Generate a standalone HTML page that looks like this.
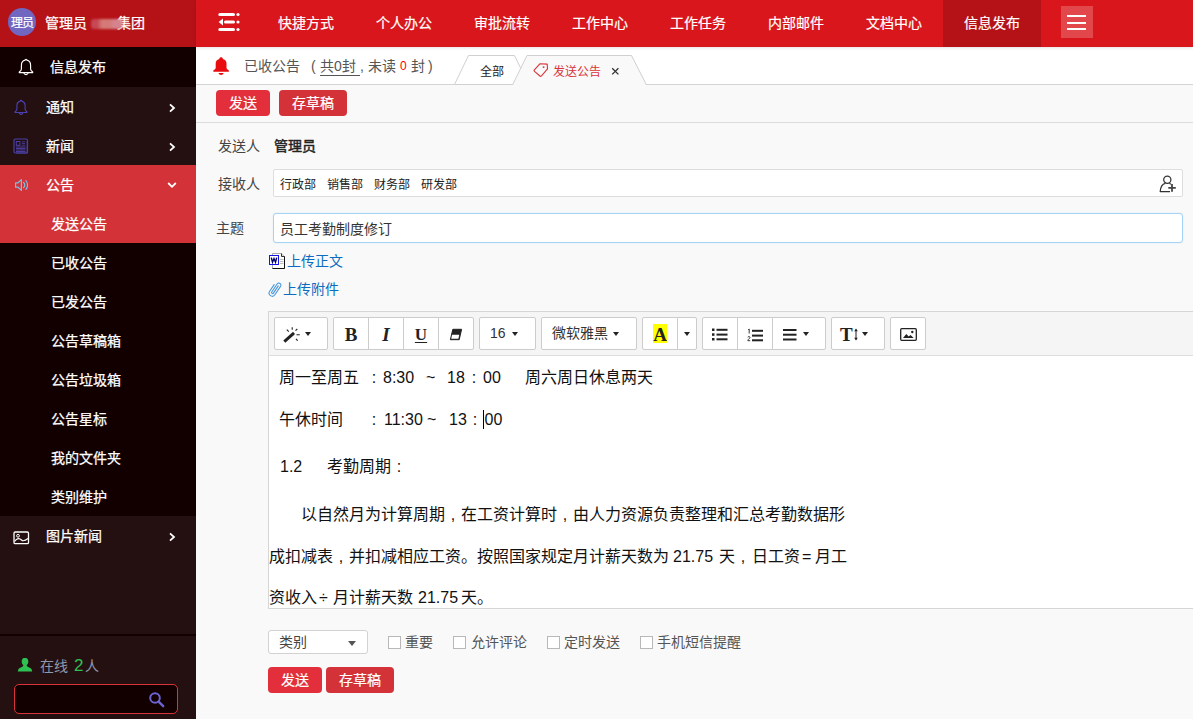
<!DOCTYPE html>
<html lang="zh-CN">
<head>
<meta charset="utf-8">
<title>OA</title>
<style>
*{box-sizing:border-box;margin:0;padding:0}
html,body{width:1193px;height:719px;overflow:hidden;background:#f9f9f9}
body{font-family:"Liberation Sans",sans-serif;font-size:14px;color:#333;position:relative}
.abs{position:absolute}
/* ---------- sidebar ---------- */
#side{position:absolute;left:0;top:0;width:196px;height:719px;background:#251011;-webkit-text-stroke:.25px #fff}
#side .hd{position:absolute;left:0;top:0;width:196px;height:47px;background:#b41217}
#side .av{position:absolute;left:8px;top:8px;width:28px;height:28px;border-radius:50%;background:#7166c0;color:#fff;font-size:12px;line-height:31px;text-align:center;letter-spacing:-.5px;text-indent:0;overflow:hidden;white-space:nowrap}
#side .nm{position:absolute;left:45px;top:0;height:46px;line-height:47px;color:#fff;font-size:14px;white-space:nowrap}
#side .ttl{position:absolute;left:0;top:47px;width:196px;height:40px;background:#120000;color:#fff;font-size:14px;line-height:40px}
#side .ttl span{position:absolute;left:50px;top:0}
.mi{position:absolute;left:0;width:196px;height:39px;line-height:41px;color:#fff;font-size:14px}
.mi span{position:absolute;left:46px;top:0}
.mi.on{background:#d33338}
.sub{position:absolute;left:0;top:243px;width:196px;height:273px;background:#120000}
.si{position:absolute;left:51px;color:#fff;font-size:14px;line-height:41px;height:39px;white-space:nowrap}
.chev{position:absolute;left:167px;top:14.500px;width:10px;height:12px}
.blur{position:absolute;left:46px;top:18.500px;width:30.500px;height:10px;background:linear-gradient(90deg,#c74755 0,#c74755 20%,#d67a78 35%,#d67a78 60%,#d5838f 75%,#d5838f 100%);border-radius:3px;filter:blur(1.200px);z-index:3}
#side .ft{-webkit-text-stroke:0;position:absolute;left:0;top:634px;width:196px;height:85px;background:#251011;border-top:2px solid #120000}
/* ---------- top bar ---------- */
#top{position:absolute;left:196px;top:0;width:997px;height:47px;background:#d9161b;box-shadow:0 1px 3px rgba(0,0,0,.12);z-index:2}
.nv{position:absolute;top:0;height:46px;line-height:46px;-webkit-text-stroke:.2px #fff;color:#fff;font-size:14px;width:98px;text-align:center;white-space:nowrap}
.nv.on{background:#b41217;height:47px}
/* ---------- tab strip ---------- */
#tabs{position:absolute;left:196px;top:47px;width:997px;height:38px;background:#fff;border-bottom:1px solid #d4d4d4}
/* ---------- content ---------- */
.ts{position:absolute;top:0;height:38px;line-height:39px;font-size:14px;color:#555;white-space:nowrap}
.btn{-webkit-text-stroke:.2px #fff;position:absolute;height:26px;border-radius:4px;color:#fff;font-size:14px;line-height:27px;text-align:center;white-space:nowrap}
.b1{background:#e22f3b}
.b2{background:#d33338}
.lbl{position:absolute;font-size:14px;color:#444;white-space:nowrap}
.inp{position:absolute;left:273px;width:910px;background:#fff;border:1px solid #ddd;border-radius:2px}

.lnk{position:absolute;font-size:14px;line-height:20px;color:#0b6cc0;white-space:nowrap}
#ed{position:absolute;left:268px;top:311px;width:930px;height:298px;border:1px solid #d6d6d6;background:#fff}
#tb{position:absolute;left:0;top:0;width:928px;height:44px;background:#f5f5f5;border-bottom:1px solid #ddd}
.tbn{position:absolute;top:5px;height:33px;background:#fff;border:1px solid #ccc;margin-left:-1px}
.tbn.f{border-radius:2px 0 0 2px;margin-left:0}
.tbn.l{border-radius:0 2px 2px 0}
.tbn.o{border-radius:2px;margin-left:0}
.tbn svg,.tbn div{position:absolute}
.car{width:0;height:0;border-left:3px solid transparent;border-right:3px solid transparent;border-top:4.500px solid #222}
.tx{position:absolute;font-size:16px;line-height:24px;color:#111;white-space:nowrap}
.cb{position:absolute;top:636px;width:13px;height:13px;background:#fff;border:1px solid #b8b8b8}
.cm{display:inline-block;width:16px;text-align:center}
.cl{position:absolute;top:632px;font-size:14px;line-height:20px;color:#555;white-space:nowrap}
</style>
</head>
<body>
<div id="side">
  <div class="hd"><div class="av">理员</div><div class="nm">管理员 <span class="blur"></span><span style="position:absolute;left:72px;top:0">集团</span></div></div>
  <div class="ttl">
    <svg class="abs" style="left:17px;top:10px" width="18" height="20" viewBox="0 0 18 20"><g transform="translate(0 -.2) scale(1 1.060)"><path d="M9 2.300c-.5 0-.9.400-.9.900-2.300.5-3.700 2.500-3.700 4.900v3.300c0 1.200-.9 2.100-2.100 3v.6h13.400v-.6c-1.200-.9-2.100-1.800-2.100-3v-3.300c0-2.400-1.400-4.400-3.700-4.900 0-.5-.4-.9-.9-.9z" fill="none" stroke="#fff" stroke-width="1.150" stroke-linejoin="round"/><path d="M6.800 15.200c.3 1 1.200 1.600 2.200 1.600s1.900-.6 2.200-1.600" fill="none" stroke="#fff" stroke-width="1.100"/></g></svg>
    <span>信息发布</span></div>
  <div class="mi" style="top:87px">
    <svg class="abs" style="left:13px;top:12px" width="16" height="17" viewBox="0 0 16 17"><g transform="translate(0 -.1) scale(1 1.080)"><path d="M8 1.300c-.4 0-.7.300-.7.700-2.100.5-3.400 2.300-3.400 4.400v3c0 1.100-.8 1.900-1.900 2.700v.5h12v-.5c-1.100-.8-1.900-1.600-1.900-2.700v-3c0-2.100-1.300-3.900-3.400-4.400 0-.4-.3-.7-.7-.7z" fill="none" stroke="#4a41b4" stroke-width="1.100" stroke-linejoin="round"/><path d="M6.200 12.900c.3.900 1 1.400 1.800 1.400s1.500-.5 1.800-1.400" fill="none" stroke="#4a41b4" stroke-width="1.100"/></g></svg>
    <span>通知</span>
    <svg class="chev" viewBox="0 0 10 12"><path d="M3 2.300l4 3.700-4 3.700" fill="none" stroke="#fff" stroke-width="1.800"/></svg></div>
  <div class="mi" style="top:126px">
    <svg class="abs" style="left:13px;top:12px" width="16" height="16" viewBox="0 0 16 16"><rect x="1" y="1" width="13.500" height="14" rx="1.500" fill="none" stroke="#4a40a6" stroke-width="1.200"/><path d="M14.200 3v12h-11" fill="none" stroke="#4a40a6" stroke-width="1.100"/><rect x="3.300" y="3.500" width="3.600" height="3.800" fill="none" stroke="#4a40a6" stroke-width="1"/><path d="M8.800 3.800h3.200M8.800 5.500h3.200M8.800 7.200h3.200" stroke="#4a40a6" stroke-width=".8"/><path d="M3 9h9.500M3 10.500h9.500M3 12h9.500M3 13.500h9.500" stroke="#4a40a6" stroke-width=".95"/></svg>
    <span>新闻</span>
    <svg class="chev" viewBox="0 0 10 12"><path d="M3 2.300l4 3.700-4 3.700" fill="none" stroke="#fff" stroke-width="1.800"/></svg></div>
  <div class="mi on" style="top:165px;height:78px">
    <svg class="abs" style="left:13.500px;top:13px" width="16" height="14" viewBox="0 0 16 14"><path d="M1.600 4.800h2.400l3.400-3.200v10.800l-3.400-3.200h-2.400z" fill="none" stroke="#78c2e2" stroke-width="1.200" stroke-linejoin="round"/><path d="M9.600 4.300c1.300 1.500 1.300 3.900 0 5.400M11.900 2.600c2.200 2.500 2.200 6.300 0 8.800" fill="none" stroke="#78c2e2" stroke-width="1.200" stroke-linecap="round"/></svg>
    <span>公告</span>
    <svg class="abs" style="left:166px;top:15px" width="12" height="10" viewBox="0 0 12 10"><path d="M2.200 3l3.800 3.800 3.800-3.800" fill="none" stroke="#fff" stroke-width="1.800"/></svg>
    <div class="si" style="top:39px">发送公告</div></div>
  <div class="sub">
    <div class="si" style="top:0">已收公告</div>
    <div class="si" style="top:39px">已发公告</div>
    <div class="si" style="top:78px">公告草稿箱</div>
    <div class="si" style="top:117px">公告垃圾箱</div>
    <div class="si" style="top:156px">公告星标</div>
    <div class="si" style="top:195px">我的文件夹</div>
    <div class="si" style="top:234px">类别维护</div>
  </div>
  <div class="mi" style="top:516px">
    <svg class="abs" style="left:13px;top:14.500px" width="17" height="14" viewBox="0 0 17 14"><rect x="1" y="1" width="14.500" height="11.600" rx="1.200" fill="none" stroke="#fff" stroke-width="1.300"/><circle cx="5" cy="4.800" r="1.400" fill="none" stroke="#fff" stroke-width="1"/><path d="M1.500 10.500c2.500-3.500 5-3.500 7-1.500s4 .5 6.500-1.500" fill="none" stroke="#fff" stroke-width="1.200"/></svg>
    <span>图片新闻</span>
    <svg class="chev" viewBox="0 0 10 12"><path d="M3 2.300l4 3.700-4 3.700" fill="none" stroke="#fff" stroke-width="1.800"/></svg></div>
  <div class="ft">
    <svg class="abs" style="left:17px;top:21px" width="16" height="16" viewBox="0 0 16 16"><path d="M8 .8c-2 0-3.300 1.500-3.300 3.600 0 1.600.7 3 1.700 3.700-.1 1.300-1 1.900-2.500 2.500-1.700.7-2.900 1.500-3.100 3.900h14.400c-.2-2.400-1.400-3.200-3.100-3.900-1.500-.6-2.400-1.200-2.500-2.500 1-.7 1.700-2.100 1.700-3.700 0-2.100-1.300-3.600-3.300-3.600z" fill="#2fc053"/></svg>
    <div class="abs" style="left:40px;top:18px;font-size:14px;line-height:24px;color:#8d99ae;white-space:nowrap">在线 <span style="color:#2fc053;font-size:17px;margin-left:2px">2</span><span style="margin-left:2px">人</span></div>
    <div class="abs" style="left:14px;top:48px;width:164px;height:30px;border:1px solid #d9343a;border-radius:5px;background:#120000">
      <svg class="abs" style="left:133px;top:6px" width="17" height="17" viewBox="0 0 17 17"><circle cx="7" cy="7" r="4.800" fill="none" stroke="#6a63d2" stroke-width="2"/><path d="M10.600 10.600l4.600 4.600" stroke="#6a63d2" stroke-width="2.400" stroke-linecap="round"/></svg>
    </div>
  </div>
</div>
<div id="top">
  <svg class="abs" style="left:20px;top:10px" width="26" height="24" viewBox="0 0 26 24"><g stroke="#fff" stroke-width="3" stroke-linecap="round"><path d="M3.800 4.500h13.700M9.500 12h8M3.800 19.500h13.700"/></g><path d="M2.600 12l4.400-3.400v6.800z" fill="#fff"/><g fill="#fff"><circle cx="22" cy="4.500" r="1.600"/><circle cx="22" cy="12" r="1.600"/><circle cx="22" cy="19.500" r="1.600"/></g></svg>
  <div class="nv" style="left:61px">快捷方式</div>
  <div class="nv" style="left:159px">个人办公</div>
  <div class="nv" style="left:257px">审批流转</div>
  <div class="nv" style="left:355px">工作中心</div>
  <div class="nv" style="left:453px">工作任务</div>
  <div class="nv" style="left:551px">内部邮件</div>
  <div class="nv" style="left:649px">文档中心</div>
  <div class="nv on" style="left:747px">信息发布</div>
  <div class="abs" style="left:865px;top:6px;width:32px;height:32px;background:#e2474c">
    <div class="abs" style="left:6px;top:9px;width:19px;height:2.300px;background:#fff"></div>
    <div class="abs" style="left:6px;top:16px;width:19px;height:2.200px;background:#fff"></div>
    <div class="abs" style="left:6px;top:22.200px;width:19px;height:2.100px;background:#fff"></div>
  </div>
</div>
<div id="tabs">
  <svg class="abs" style="left:16px;top:9px" width="18" height="20" viewBox="0 0 18 20"><path d="M9.100 1.300c-1 0-1.700.6-1.800 1.600C4.600 3.500 3.700 5.300 3.700 7.600v3.900c0 1.300-1 2.100-2.400 3.100v1.200h15.600v-1.200c-1.400-1-2.400-1.800-2.400-3.100V7.600c0-2.300-.9-4.100-3.600-4.700-.1-1-.8-1.600-1.800-1.600z" fill="#e80c0e"/><path d="M6.500 16.900h5.200c-.4 1.200-1.400 2-2.600 2s-2.200-.8-2.600-2z" fill="#e80c0e"/></svg>
  <div class="ts" style="left:48px">已收公告</div>
  <div class="ts" style="left:115px">(</div>
  <div class="ts" style="left:124px">共0封</div>
  <div class="abs" style="left:124px;top:28px;width:40px;height:1px;background:#555"></div>
  <div class="ts" style="left:164px">,</div>
  <div class="ts" style="left:172px">未读</div>
  <div class="ts" style="left:204px;color:#f00;font-size:12px">0</div>
  <div class="ts" style="left:215px">封</div>
  <div class="ts" style="left:232px">)</div>
  <svg class="abs" style="left:250px;top:0" width="220" height="38" viewBox="0 0 220 38">
    <path d="M8.500 37.500L22.500 8.500H68.500L82.500 37.500z" fill="#fff" stroke="#d0d0d0" stroke-width="1"/>
    <path d="M66.500 38.500L81 8.500H185.500L200.500 38.500z" fill="#f9f9f9" stroke="none"/>
    <path d="M66.500 38L81 8.500H185.500L200.500 38" fill="none" stroke="#d0d0d0" stroke-width="1"/>
  </svg>
  <div class="abs" style="left:284px;top:11px;font-size:12px;line-height:29px;color:#222;white-space:nowrap">全部</div>
  <svg class="abs" style="left:337px;top:16px" width="16" height="15" viewBox="0 0 16 15"><path d="M6.800 .8L14.200 1.100L14.500 5.900L8.500 12.900Q7.700 13.700 6.900 13L1.500 8.300Q.7 7.600 1.400 6.800Z" fill="none" stroke="#d9343a" stroke-width="1.100" stroke-linejoin="round"/><circle cx="10.600" cy="4.100" r=".95" fill="#d9343a"/></svg>
  <div class="abs" style="left:357px;top:11px;font-size:12px;line-height:28px;color:#d9343a;white-space:nowrap">发送公告</div>
  <svg class="abs" style="left:415px;top:20px" width="9" height="9" viewBox="0 0 9 9"><path d="M1.200 1.200l6.200 6.200M7.400 1.200l-6.200 6.200" stroke="#333" stroke-width="1.300"/></svg>
</div>
<div class="btn b1" style="left:216px;top:90px;width:54px">发送</div>
<div class="btn b2" style="left:279px;top:90px;width:68px">存草稿</div>
<div class="abs" style="left:196px;top:122px;width:997px;height:1px;background:#dcdcdc"></div>
<div class="lbl" style="left:218px;top:136px;line-height:20px">发送人</div>
<div class="lbl" style="left:274px;top:136px;line-height:20px;color:#222;-webkit-text-stroke:.45px #222">管理员</div>
<div class="lbl" style="left:218px;top:174px;line-height:20px">接收人</div>
<div class="inp" style="top:169px;height:28px;border-radius:2px">
  <div class="abs" style="left:6px;top:0;font-size:12px;line-height:31px;color:#222;white-space:nowrap;word-spacing:0"><span>行政部</span><span style="margin-left:11px">销售部</span><span style="margin-left:11px">财务部</span><span style="margin-left:11px">研发部</span></div>
  <svg class="abs" style="left:884px;top:5px" width="20" height="19" viewBox="0 0 20 19"><circle cx="9.300" cy="4.700" r="3.600" fill="none" stroke="#333" stroke-width="1.250"/><path d="M7.300 8.300C4.300 9 2.500 12 2.200 16.600H12" fill="none" stroke="#333" stroke-width="1.250" stroke-linejoin="round"/><path d="M11.300 8.300c.7.200 1.200.5 1.700.9" fill="none" stroke="#333" stroke-width="1.200"/><path d="M14 9.100v7.700M10.300 12.900h7.500" stroke="#444" stroke-width="1.800"/></svg>
</div>
<div class="lbl" style="left:216px;top:218px;line-height:20px">主题</div>
<div class="inp" style="top:213px;height:30px;border-color:#a3d3f5;border-radius:3px;box-shadow:0 0 2px rgba(102,175,233,.18)">
  <div class="abs" style="left:6px;top:0;font-size:14px;line-height:31px;color:#333;white-space:nowrap">员工考勤制度修订</div>
</div>
<svg class="abs" style="left:269px;top:253px" width="17" height="16" viewBox="0 0 17 16"><path d="M3.500 .5h9l3 3v12h-12z" fill="#fff" stroke="#aaa" stroke-width="1"/><path d="M12.500 .5v3h3" fill="#ddd" stroke="#333" stroke-width="1"/><path d="M15.500 3.500v12h-12" fill="none" stroke="#111" stroke-width="1"/><path d="M11 6.500h3.500M11 8.500h3.500M11 10.500h3.500" stroke="#bbb" stroke-width="1"/><rect x=".5" y="2.500" width="9" height="9" fill="#fff" stroke="#1212e6" stroke-width="1"/><path d="M2.300 4.600l1.200 4.600 1.500-3.600 1.500 3.600 1.200-4.600" fill="none" stroke="#00006e" stroke-width="1.400"/></svg>
<div class="lnk" style="left:287px;top:251px">上传正文</div>
<svg class="abs" style="left:268px;top:281px" width="15" height="16" viewBox="0 0 15 16"><path transform="translate(7.100 7.800) rotate(34) scale(1.180)" d="M.85 -3.500V3.800A.85 .85 0 0 1 -.85 3.800V-4.300A1.750 1.750 0 0 1 2.650 -4.300V4.300A2.650 2.650 0 0 1 -2.650 4.300V-2.500" fill="none" stroke="#4b98da" stroke-width=".95" stroke-linecap="round"/></svg>
<div class="lnk" style="left:283px;top:279px">上传附件</div>
<div id="ed">
 <div id="tb">
  <div class="tbn o" style="left:5px;width:54px">
    <svg style="left:6px;top:6px" width="24" height="22" viewBox="0 0 24 22"><path d="M3.300 17.700l8.400-7.600" stroke="#222" stroke-width="3" stroke-linecap="butt"/><path d="M11.500 10.300l1.500-1.400" stroke="#222" stroke-width="3"/><path d="M11.200 3.200v2.600M5.800 5.600l2 2M16.300 5l-1.800 1.600M15.500 10.800h3.300M15 15l1.700 1.700" stroke="#222" stroke-width="1.100"/></svg>
    <div class="car" style="left:30px;top:14px"></div></div>
  <div class="tbn f" style="left:64px;width:36px"><div style="left:0;top:0;width:34px;text-align:center;font-family:'Liberation Serif',serif;font-weight:bold;font-size:19px;line-height:33px;color:#222">B</div></div>
  <div class="tbn" style="left:100px;width:36px"><div style="left:0;top:0;width:34px;text-align:center;font-family:'Liberation Serif',serif;font-weight:bold;font-style:italic;font-size:19px;line-height:33px;color:#222">I</div></div>
  <div class="tbn" style="left:135px;width:36px"><div style="left:0;top:0;width:34px;text-align:center;font-family:'Liberation Serif',serif;font-weight:bold;font-size:17px;line-height:33px;color:#222;text-decoration:underline;text-underline-offset:2px">U</div></div>
  <div class="tbn l" style="left:170px;width:36px">
    <svg style="left:10px;top:10px" width="14" height="13" viewBox="0 0 14 13"><path d="M3.800 1.300h8.800l-2.400 10.400h-8.800z" fill="#222" stroke="#222" stroke-width="1" stroke-linejoin="round"/><path d="M3.100 6.800h7.200l-.9 4h-7.200z" fill="#fff"/></svg></div>
  <div class="tbn o" style="left:210px;width:57px"><div style="left:10px;top:0;font-size:14px;line-height:31px;color:#333">16</div><div class="car" style="left:32px;top:14px"></div></div>
  <div class="tbn o" style="left:272px;width:96px"><div style="left:10px;top:0;font-size:14px;line-height:31px;color:#333;white-space:nowrap">微软雅黑</div><div class="car" style="left:71px;top:14px"></div></div>
  <div class="tbn f" style="left:373px;width:36px"><div style="left:10px;top:6px;width:14px;height:19px;background:#ff0"></div><div style="left:0;top:0;width:34px;text-align:center;font-family:'Liberation Serif',serif;font-weight:bold;font-size:19px;line-height:33px;color:#222">A</div></div>
  <div class="tbn l" style="left:409px;width:20px"><div class="car" style="left:6px;top:14px"></div></div>
  <div class="tbn f" style="left:433px;width:36px">
    <svg style="left:9px;top:10px" width="16" height="13" viewBox="0 0 16 13"><g fill="#222"><rect x="0" y="0.500" width="2.500" height="2.500"/><rect x="0" y="5.300" width="2.500" height="2.500"/><rect x="0" y="10" width="2.500" height="2.500"/><rect x="4.500" y="0.800" width="11" height="2"/><rect x="4.500" y="5.600" width="11" height="2"/><rect x="4.500" y="10.300" width="11" height="2"/></g></svg></div>
  <div class="tbn" style="left:469px;width:36px">
    <svg style="left:9px;top:9.500px" width="16" height="15" viewBox="0 0 16 15"><g fill="#222"><rect x="5" y="1.800" width="11" height="2"/><rect x="5" y="6.600" width="11" height="2"/><rect x="5" y="11.300" width="11" height="2"/></g><path d="M1.200 1.800l1-.8v4.500" fill="none" stroke="#222" stroke-width=".9"/><path d="M.8 9.300c.2-1 2.200-1 2.200.1 0 1-2 1.800-2.200 3.300h2.400" fill="none" stroke="#222" stroke-width=".9"/></svg></div>
  <div class="tbn l" style="left:504px;width:54px">
    <svg style="left:10px;top:11px" width="15" height="12" viewBox="0 0 15 12"><g fill="#222"><rect x="0" y="0" width="13.500" height="2"/><rect x="0" y="4.700" width="13.500" height="2"/><rect x="0" y="9.500" width="13.500" height="2"/></g></svg>
    <div class="car" style="left:30px;top:14px"></div></div>
  <div class="tbn o" style="left:562px;width:54px"><div style="left:8px;top:0;font-family:'Liberation Serif',serif;font-weight:bold;font-size:19px;line-height:33px;color:#222">T</div>
    <svg style="left:21px;top:10px" width="6" height="13" viewBox="0 0 6 13"><path d="M3 1.500v10" stroke="#222" stroke-width="1"/><path d="M1.200 3.300l1.800-2.800 1.800 2.800zM1.200 9.700l1.800 2.800 1.800-2.800z" fill="#222"/></svg>
    <div class="car" style="left:30px;top:14px"></div></div>
  <div class="tbn o" style="left:621px;width:36px">
    <svg style="left:9px;top:10px" width="17" height="13" viewBox="0 0 17 13"><rect x="0.700" y="0.700" width="15.600" height="11.600" rx="1" fill="none" stroke="#222" stroke-width="1.300"/><path d="M3 10l3.300-4 2.400 2.600 1.800-1.600 3.200 3z" fill="#222"/><circle cx="12.300" cy="4" r="1.200" fill="#222"/></svg></div>
 </div>
</div>
<div class="tx" style="left:279px;top:366px">周一至周五</div>
<div class="tx" style="left:366px;top:366px;width:16px;text-align:center">:</div>
<div class="tx" style="left:383px;top:366px">8:30</div>
<div class="tx" style="left:426px;top:366px">~</div>
<div class="tx" style="left:447px;top:366px">18</div>
<div class="tx" style="left:466px;top:366px;width:16px;text-align:center">:</div>
<div class="tx" style="left:483px;top:366px">00</div>
<div class="tx" style="left:525px;top:366px">周六周日休息两天</div>

<div class="tx" style="left:279px;top:408px">午休时间</div>
<div class="tx" style="left:366px;top:408px;width:16px;text-align:center">:</div>
<div class="tx" style="left:384px;top:408px">11:30</div>
<div class="tx" style="left:427px;top:408px">~</div>
<div class="tx" style="left:449px;top:408px">13</div>
<div class="tx" style="left:467px;top:408px;width:16px;text-align:center">:</div>
<div class="abs" style="left:483px;top:410px;width:1px;height:19px;background:#000"></div>
<div class="tx" style="left:484.500px;top:408px">00</div>

<div class="tx" style="left:280px;top:455px">1.2</div>
<div class="tx" style="left:327px;top:455px">考勤周期</div>
<div class="tx" style="left:391px;top:455px;width:16px;text-align:center">:</div>

<div class="tx" style="left:301px;top:503px">以自然月为计算周期<span class="cm">,</span>在工资计算时<span class="cm">,</span>由人力资源负责整理和汇总考勤数据形</div>
<div class="tx" style="left:269px;top:545px">成扣减表<span class="cm">,</span>并扣减相应工资。按照国家规定月计薪天数为</div>
<div class="tx" style="left:673px;top:545px">21.75</div>
<div class="tx" style="left:719px;top:545px">天<span class="cm">,</span></div><div class="tx" style="left:752px;top:545px">日工资</div>
<div class="tx" style="left:802px;top:545px">=</div>
<div class="tx" style="left:815px;top:545px">月工</div>
<div class="tx" style="left:269px;top:586px">资收入</div>
<div class="tx" style="left:319px;top:586px">÷</div>
<div class="tx" style="left:333px;top:586px">月计薪天数</div>
<div class="tx" style="left:418px;top:586px">21.75</div>
<div class="tx" style="left:461px;top:586px">天。</div>

<div class="abs" style="left:268px;top:630px;width:100px;height:24px;background:#fff;border:1px solid #d2d2d2;border-radius:3px">
  <div class="abs" style="left:10px;top:0;font-size:14px;line-height:22px;color:#444">类别</div>
  <div class="abs" style="left:78.500px;top:10px;width:0;height:0;border-left:4.800px solid transparent;border-right:4.800px solid transparent;border-top:5px solid #555"></div>
</div>
<div class="cb" style="left:388px"></div><div class="cl" style="left:405px">重要</div>
<div class="cb" style="left:453px"></div><div class="cl" style="left:471px">允许评论</div>
<div class="cb" style="left:547px"></div><div class="cl" style="left:564px">定时发送</div>
<div class="cb" style="left:640px"></div><div class="cl" style="left:657px">手机短信提醒</div>
<div class="btn b1" style="left:268px;top:667px;width:54px">发送</div>
<div class="btn b2" style="left:326px;top:667px;width:68px">存草稿</div>
</body>
</html>
